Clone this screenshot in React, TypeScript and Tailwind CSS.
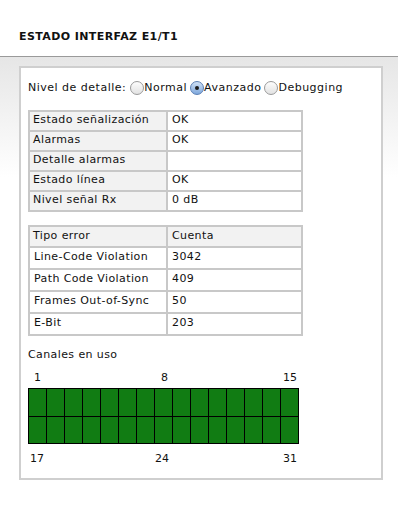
import React from 'react'

const estado = [
  ['Estado señalización', 'OK'],
  ['Alarmas', 'OK'],
  ['Detalle alarmas', ''],
  ['Estado línea', 'OK'],
  ['Nivel señal Rx', '0 dB'],
]

const errores = [
  ['Line-Code Violation', '3042'],
  ['Path Code Violation', '409'],
  ['Frames Out-of-Sync', '50'],
  ['E-Bit', '203'],
]

function Radio({ checked, label }: { checked?: boolean; label: string }) {
  return (
    <span className="flex items-center">
      <span
        className={
          'w-[14px] h-[14px] rounded-full border flex items-center justify-center ' +
          (checked
            ? 'border-[#5a7fb5] bg-gradient-to-b from-[#cfe0f5] to-[#7fa8dc]'
            : 'border-[#9a9a9a] bg-gradient-to-b from-[#fdfdfd] to-[#e2e2e2]')
        }
      >
        {checked && <span className="w-[4px] h-[4px] rounded-full bg-[#1a1a1a]" />}
      </span>
      <span>{label}</span>
    </span>
  )
}

export default function App() {
  const cols = Array.from({ length: 15 })
  return (
    <div className="w-[398px] h-[506px] bg-white text-[11px] text-[#111] font-['DejaVu_Sans',Verdana,sans-serif]">
      <div className="h-[57px] flex items-end pb-[11px] pl-[19px] border-b border-[#9a9a9a]">
        <h1 className="text-[11px] font-bold tracking-[0.4px] text-[#111]">ESTADO INTERFAZ E1/T1</h1>
      </div>
      <div className="bg-gradient-to-b from-[#e6e6e6] to-white to-[120px] pt-[9px] px-[19px] pb-[25px] pr-[15px]">
        <div className="bg-white border-2 border-[#cfcfcf] h-[414px] px-[7px] pt-[12px]">
          <div className="flex items-center gap-[3px] tracking-[0.5px]">
            <span className="mr-[1px]">Nivel de detalle:</span>
            <Radio label="Normal" />
            <Radio checked label="Avanzado" />
            <Radio label="Debugging" />
          </div>

          <table className="mt-[13px] w-[275px] border-collapse tracking-[0.4px]">
            <tbody>
              {estado.map(([k, v]) => (
                <tr key={k} className="h-[20px]">
                  <td className="w-[138px] border-2 border-[#c8c8c8] bg-[#f2f2f2] px-[3px] py-0">{k}</td>
                  <td className="border-2 border-[#c8c8c8] px-[4px] py-0">{v}</td>
                </tr>
              ))}
            </tbody>
          </table>

          <table className="mt-[13px] w-[275px] border-collapse tracking-[0.4px]">
            <tbody>
              <tr className="h-[21px] bg-[#f2f2f2]">
                <td className="w-[138px] border-2 border-[#c8c8c8] px-[3px] py-0">Tipo error</td>
                <td className="border-2 border-[#c8c8c8] px-[4px] py-0">Cuenta</td>
              </tr>
              {errores.map(([k, v]) => (
                <tr key={k} className="h-[22px]">
                  <td className="border-2 border-[#c8c8c8] px-[4px] py-0">{k}</td>
                  <td className="border-2 border-[#c8c8c8] px-[4px] py-0">{v}</td>
                </tr>
              ))}
            </tbody>
          </table>

          <div className="mt-[11px] tracking-[0.4px]">Canales en uso</div>
          <div className="relative h-[25px] w-[271px]">
            <span className="absolute left-[6px] top-[7px]">1</span>
            <span className="absolute left-[133px] top-[7px]">8</span>
            <span className="absolute left-[255px] top-[7px]">15</span>
          </div>
          <div className="w-[271px] border-[1.5px] border-black">
            {[0, 1].map(r => (
              <div key={r} className={'flex h-[27px] ' + (r === 1 ? 'border-t border-black' : '')}>
                {cols.map((_, i) => (
                  <div key={i} className={'flex-1 bg-[#117c13] ' + (i > 0 ? 'border-l border-black' : '')} />
                ))}
              </div>
            ))}
          </div>
          <div className="relative h-[22px] w-[271px]">
            <span className="absolute left-[2px] top-[7px]">17</span>
            <span className="absolute left-[127px] top-[7px]">24</span>
            <span className="absolute left-[255px] top-[7px]">31</span>
          </div>
        </div>
      </div>
    </div>
  )
}
